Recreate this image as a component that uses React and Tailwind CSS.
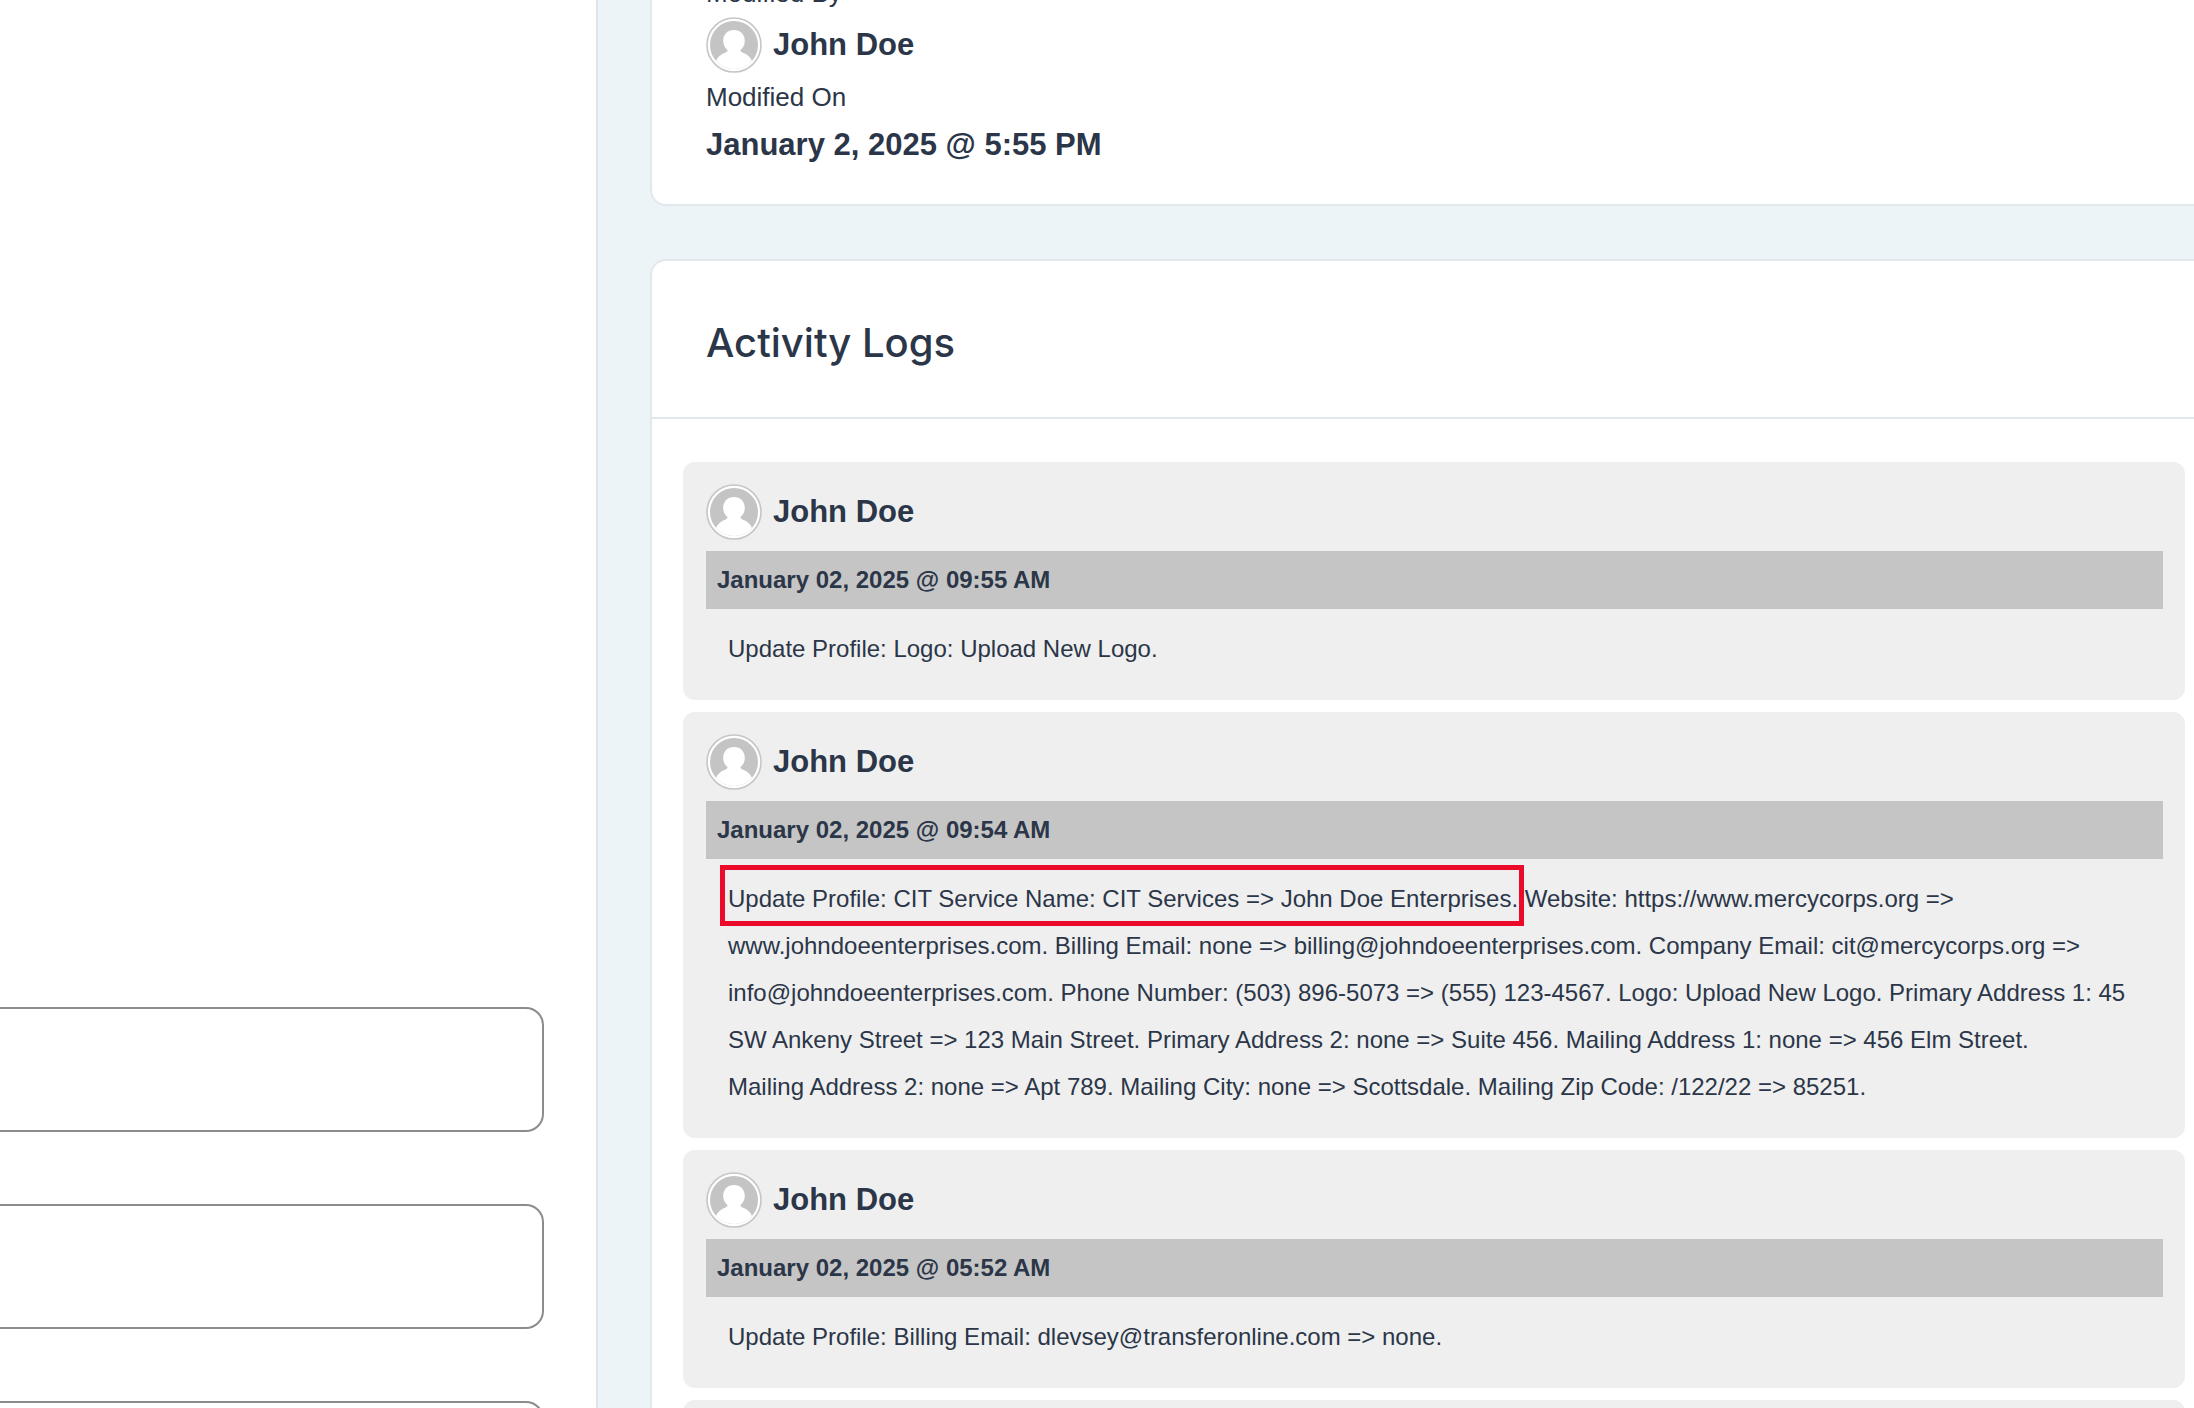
const logs = [
  {
    name: "John Doe",
    time: "January 02, 2025 @ 09:55 AM",
    lines: ["Update Profile: Logo: Upload New Logo."],
  },
  {
    name: "John Doe",
    time: "January 02, 2025 @ 09:54 AM",
    marked: "Update Profile: CIT Service Name: CIT Services => John Doe Enterprises.",
    lines: [
      " Website: https://www.mercycorps.org => www.johndoeenterprises.com. Billing Email: none => billing@johndoeenterprises.com. Company Email: cit@mercycorps.org => info@johndoeenterprises.com. Phone Number: (503) 896-5073 => (555) 123-4567. Logo: Upload New Logo. Primary Address 1: 45 SW Ankeny Street => 123 Main Street. Primary Address 2: none => Suite 456. Mailing Address 1: none => 456 Elm Street.",
      "Mailing Address 2: none => Apt 789. Mailing City: none => Scottsdale. Mailing Zip Code: /122/22 => 85251.",
    ],
  },
  {
    name: "John Doe",
    time: "January 02, 2025 @ 05:52 AM",
    lines: ["Update Profile: Billing Email: dlevsey@transferonline.com => none."],
  },
];

function Avatar() {
  return (
    <svg viewBox="0 0 56 56" className="size-14 shrink-0" aria-hidden="true">
      <defs>
        <clipPath id="avatar-disc">
          <circle cx="28" cy="28" r="24" />
        </clipPath>
      </defs>
      <circle cx="28" cy="28" r="27" fill="#ffffff" stroke="#c6c6c6" strokeWidth="1.6" />
      <circle cx="28" cy="28" r="24" fill="#c4c4c4" />
      <g clipPath="url(#avatar-disc)" fill="#ffffff">
        <path d="M28 13c6.600 0 10.800 4.600 10.800 10.800 0 4-1.600 7.200-4.300 9.200 0 1.500.5 1.800 2 2.400C41.500 37 44.500 40 46 44v12H10V44c1.500-4 4.500-7 9.500-8.600 1.500-.6 2-.9 2-2.400-2.700-2-4.300-5.200-4.300-9.200C17.200 17.600 21.400 13 28 13z" />
      </g>
    </svg>
  );
}

function Person({ name }) {
  return (
    <div className="flex items-center gap-[11px]">
      <Avatar />
      <span className="text-[31px] leading-10 font-bold">{name}</span>
    </div>
  );
}

function LogEntry({ entry }) {
  return (
    <li className="rounded-[12px] bg-[#efefef] pt-[22px] pr-[22px] pb-7 pl-[23px]">
      <Person name={entry.name} />
      <div className="mt-[11px] bg-[#c5c5c5] pl-[11px] text-[24px] leading-[58px] font-bold">
        {entry.time}
      </div>
      <p className="px-[22px] pt-4 text-[24px] leading-[47px]">
        {entry.marked && (
          <span className="relative">
            {entry.marked}
            <span className="absolute -top-5 -right-[6px] -bottom-[14px] -left-2 border-[5px] border-[#eb0a2a]" />
          </span>
        )}
        {entry.lines.map((line, index) => (
          <span key={line}>
            {index > 0 && <br />}
            {line}
          </span>
        ))}
      </p>
    </li>
  );
}

export default function App() {
  return (
    <div className="flex h-screen overflow-hidden bg-[#ecf4f7] font-['Liberation_Sans',Arial,sans-serif] text-[#2b3648]">
      <section className="flex w-[598px] shrink-0 flex-col gap-[72px] border-r-2 border-[#dfe3e9] bg-white pt-[1007px] pr-[52px]">
        {["Address", "City", "Zip code"].map((label) => (
          <input
            key={label}
            type="text"
            aria-label={label}
            className="h-[125px] w-full shrink-0 rounded-r-[18px] border-2 border-l-0 border-[#8c8c8c] bg-white px-6 text-[24px]"
          />
        ))}
      </section>

      <main className="ml-[52px] flex min-w-0 flex-1 flex-col gap-[53px]">
        <section className="-mt-[22px] rounded-bl-[16px] border-b-2 border-l-2 border-[#e2e7ec] bg-white pb-[39px] pl-[54px]">
          <p className="text-[26px] leading-[30px]">Modified By</p>
          <div className="mt-[9px]">
            <Person name="John Doe" />
          </div>
          <p className="mt-[9px] text-[26px] leading-[30px]">Modified On</p>
          <p className="mt-[13px] text-[31px] leading-10 font-bold">January 2, 2025 @ 5:55 PM</p>
        </section>

        <section className="rounded-tl-[16px] border-t-2 border-l-2 border-[#e2e7ec] bg-white">
          <h2 className="border-b-2 border-[#e2e7ec] pt-14 pb-12 pl-[54px] font-['Inter',sans-serif] text-[40px] leading-[52px] font-medium">
            Activity Logs
          </h2>
          <ul className="flex flex-col gap-3 pt-[43px] pr-[9px] pl-[31px]">
            {logs.map((entry) => (
              <LogEntry key={entry.time} entry={entry} />
            ))}
            <li className="h-60 shrink-0 rounded-[12px] bg-[#efefef]" />
          </ul>
        </section>
      </main>
    </div>
  );
}
